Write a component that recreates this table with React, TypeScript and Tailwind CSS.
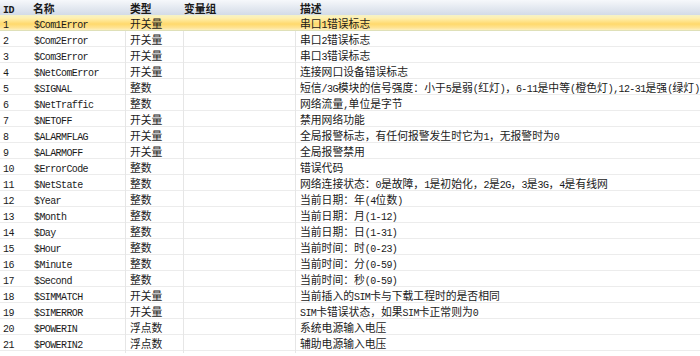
import React from "react";

type Row = [string, string, string, string];

const rows: Row[] = [
  ["1", "$Com1Error", "开关量", "串口1错误标志"],
  ["2", "$Com2Error", "开关量", "串口2错误标志"],
  ["3", "$Com3Error", "开关量", "串口3错误标志"],
  ["4", "$NetComError", "开关量", "连接网口设备错误标志"],
  ["5", "$SIGNAL", "整数", "短信/3G模块的信号强度：小于5是弱(红灯)，6-11是中等(橙色灯),12-31是强(绿灯)"],
  ["6", "$NetTraffic", "整数", "网络流量,单位是字节"],
  ["7", "$NETOFF", "开关量", "禁用网络功能"],
  ["8", "$ALARMFLAG", "开关量", "全局报警标志，有任何报警发生时它为1，无报警时为0"],
  ["9", "$ALARMOFF", "开关量", "全局报警禁用"],
  ["10", "$ErrorCode", "整数", "错误代码"],
  ["11", "$NetState", "整数", "网络连接状态：0是故障，1是初始化，2是2G，3是3G，4是有线网"],
  ["12", "$Year", "整数", "当前日期：年(4位数)"],
  ["13", "$Month", "整数", "当前日期：月(1-12)"],
  ["14", "$Day", "整数", "当前日期：日(1-31)"],
  ["15", "$Hour", "整数", "当前时间：时(0-23)"],
  ["16", "$Minute", "整数", "当前时间：分(0-59)"],
  ["17", "$Second", "整数", "当前时间：秒(0-59)"],
  ["18", "$SIMMATCH", "开关量", "当前插入的SIM卡与下载工程时的是否相同"],
  ["19", "$SIMERROR", "开关量", "SIM卡错误状态，如果SIM卡正常则为0"],
  ["20", "$POWERIN", "浮点数", "系统电源输入电压"],
  ["21", "$POWERIN2", "浮点数", "辅助电源输入电压"],
];

function Txt({ s, bold }: { s: string; bold?: boolean }) {
  const parts = s.split(/([\u0000-\u00ff]+)/).filter((p) => p.length > 0);
  return (
    <span className={bold ? "font-bold whitespace-nowrap leading-[15px]" : "whitespace-nowrap leading-[15px]"}>
      {parts.map((p, i) =>
        /^[\u0000-\u00ff]+$/.test(p) ? (
          <span
            key={i}
            className="font-['Liberation_Mono',monospace] text-[10px] tracking-[-0.6px] leading-[15px]"
          >
            {p}
          </span>
        ) : (
          <span
            key={i}
            className="font-['Noto_Sans_CJK_SC',sans-serif] text-[10.8px] leading-[15px]"
          >
            {p}
          </span>
        )
      )}
    </span>
  );
}

export default function App() {
  return (
    <div className="w-[700px] h-[356px] bg-white overflow-hidden text-[#1a1a1a] leading-[15px]">
      <div className="grid grid-cols-[30px_95px_58px_112px_1fr] h-[15px] bg-gradient-to-b from-[#f6f8fb] to-[#d3dbe7]">
        <div className="pl-[3px]">
          <Txt s="ID" bold />
        </div>
        <div className="pl-[3px]">
          <Txt s="名称" bold />
        </div>
        <div className="pl-[5px]">
          <Txt s="类型" bold />
        </div>
        <div className="pl-[1px]">
          <Txt s="变量组" bold />
        </div>
        <div className="pl-[5px]">
          <Txt s="描述" bold />
        </div>
      </div>
      {rows.map((r, i) => {
        const sel = i === 0;
        const line = sel ? "border-l border-transparent" : "border-l border-[#e6e6e6]";
        return (
          <div
            key={r[0]}
            className={
              "grid grid-cols-[30px_95px_58px_112px_1fr] h-[16px] border-b " +
              (sel
                ? "bg-[linear-gradient(to_bottom,#f4f2c8_0%,#fff0b0_20%,#ffd96c_60%,#ffe494_85%,#fcefbf_100%)] border-[#dfe0b8]"
                : "border-[#ececec]")
            }
          >
            <div className="pl-[3px]">
              <Txt s={r[0]} />
            </div>
            <div className="pl-[4px]">
              <Txt s={r[1]} />
            </div>
            <div className={"pl-[4px] " + line}>
              <Txt s={r[2]} />
            </div>
            <div className={line}></div>
            <div className={"pl-[4px] " + line}>
              <Txt s={r[3]} />
            </div>
          </div>
        );
      })}
    </div>
  );
}
